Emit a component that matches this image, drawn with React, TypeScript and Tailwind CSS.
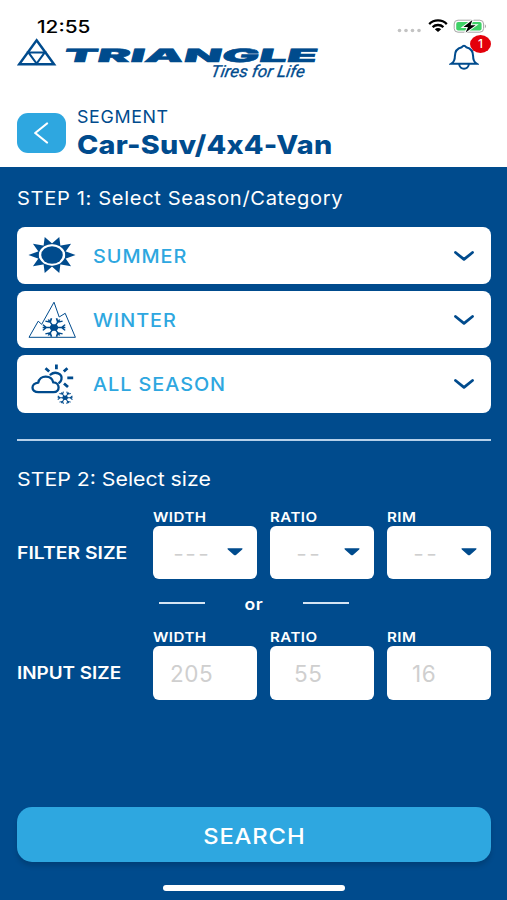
import type { ReactNode } from 'react'

const seasons = [
  { name: 'SUMMER', icon: <SunIcon /> },
  { name: 'WINTER', icon: <MountainIcon /> },
  { name: 'ALL SEASON', icon: <CloudIcon /> },
]

const filters = [
  { label: 'WIDTH', empty: '---', example: '205', pad: 'pl-[17px]' },
  { label: 'RATIO', empty: '--', example: '55', pad: 'pl-[24px]' },
  { label: 'RIM', empty: '--', example: '16', pad: 'pl-[25px]' },
]

// six-armed snowflake centred on 0,0
function Snowflake({ transform }: { transform: string }) {
  return (
    <g transform={transform} stroke="#004b8d" strokeWidth="1.6" fill="none">
      {[0, 60, 120, 180, 240, 300].map((a) => (
        <path key={a} transform={`rotate(${a + 30})`} d="M0 0V-11M-3.4 -10.8L0 -7.4L3.4 -10.8" />
      ))}
      <circle r="3.2" fill="#004b8d" />
    </g>
  )
}

function SunIcon() {
  return (
    <svg width="48" height="38" viewBox="0 0 48 38" fill="#004b8d">
      {[0, 36, 72, 108, 144, 180, 216, 252, 288, 324].map((a) => (
        <path
          key={a}
          transform={`translate(24 19) scale(1.24 1) rotate(${a + 18})`}
          d="M-3.9 -10.2L0 -19L3.9 -10.2Q0 -11 -3.9 -10.2Z"
        />
      ))}
      <ellipse cx="24" cy="19" rx="10.8" ry="8.8" />
    </svg>
  )
}

function MountainIcon() {
  return (
    <svg width="48" height="38" viewBox="0 0 48 38" fill="none">
      <path
        d="M1 36.3L10.2 20.2L13.7 23.3L26 1.2L31.2 16L37.2 12.3L47.4 36.3Z"
        stroke="#004b8d"
        strokeWidth="1"
      />
      <Snowflake transform="translate(26 26.5) scale(1.03 0.84)" />
    </svg>
  )
}

function CloudIcon() {
  return (
    <svg width="48" height="42" viewBox="0 0 48 42" fill="none">
      <g stroke="#004b8d" strokeWidth="2.3" strokeLinecap="round" strokeLinejoin="round">
        <path d="M10.5 29.2C2.5 29.2 2.6 20.2 10.3 19.6C11.5 11.8 23.5 11.4 25.3 19.4C32.2 19.6 32.5 29.2 25.5 29.2Z" />
        <path d="M22.5 11.6C27 7.8 34.8 10.5 33.4 16.4C33 18 32.3 19 31.2 19.7" />
      </g>
      <path
        d="M28.4 1.5V6.2M17.5 5.2L21.2 8.5M39.4 5.2L35.8 8.5M39.3 14.9H45.2M36 20.5L40 24"
        stroke="#004b8d"
        strokeWidth="2.8"
      />
      <Snowflake transform="translate(37.1 34.8) scale(0.68 0.56)" />
    </svg>
  )
}

function Logo() {
  return (
    <svg width="306" height="42" viewBox="0 0 306 42" fill="#004b8d" className="mt-px">
      <g fill="none" stroke="#004b8d">
        <path d="M19.6 2.3L37 26.3H2.2Z" strokeWidth="2.5" />
        <path d="M11.4 14.4H27.8L19.6 25.6Z" strokeWidth="2" />
      </g>
      <text
        transform="translate(45.5 23.8) skewX(-14)"
        fontFamily="Inter, 'Liberation Sans', sans-serif"
        fontWeight="900"
        fontSize="18.2"
        textLength="253.5"
        lengthAdjust="spacingAndGlyphs"
        stroke="#004b8d"
        strokeWidth="0.5"
      >
        TRIANGLE
      </text>
      <text
        transform="translate(193 38.5) skewX(-10)"
        fontFamily="Roboto, 'Liberation Sans', sans-serif"
        fontSize="16.5"
        fontStyle="italic"
        textLength="94"
        lengthAdjust="spacingAndGlyphs"
        stroke="#004b8d"
        strokeWidth="0.3"
      >
        Tires for Life
      </text>
    </svg>
  )
}

function StatusBar() {
  return (
    <div className="flex h-[37px] items-start justify-between pl-[37px] pr-[18px] pt-[18px]">
      <span className="origin-left scale-x-[1.22] text-[17px] font-medium leading-[18px] text-black">12:55</span>
      <svg width="92" height="18" viewBox="0 0 92 18">
        <g fill="#c3c3c3">
          <circle cx="2.5" cy="12.5" r="1.8" />
          <circle cx="9" cy="12.5" r="1.8" />
          <circle cx="15.5" cy="12.5" r="1.8" />
          <circle cx="22" cy="12.5" r="1.8" />
        </g>
        <g transform="translate(41 0)" fill="none" stroke="#000" strokeWidth="2.3">
          <path d="M-8.8 6.1C-4 1.2 4 1.2 8.8 6.1" />
          <path d="M-5.4 9.1C-2.4 6.3 2.4 6.3 5.4 9.1" />
          <path d="M-3.2 11.2C-1.4 9.7 1.4 9.7 3.2 11.2L0 14Z" fill="#000" stroke="none" />
        </g>
        <rect x="57.2" y="2.2" width="29.4" height="12" rx="3.8" fill="#fff" stroke="#a5a5a5" />
        <rect x="59.2" y="4" width="25.4" height="8.4" rx="2" fill="#3fd167" />
        <path d="M87.9 6.2V10.2Q90.1 8.2 87.9 6.2Z" fill="#a5a5a5" />
        <path
          d="M75.4 2L66.4 9H71L68.6 14.4L78.6 7.2H73.6Z"
          fill="#000"
          stroke="#fff"
          strokeWidth="2"
          paintOrder="stroke"
        />
      </svg>
    </div>
  )
}

function Bell() {
  return (
    <div className="relative mr-[28px] mt-[6px] h-[30px] w-[30px]">
      <svg width="30" height="30" viewBox="0 0 30 30" fill="none" stroke="#004b8d" strokeWidth="2">
        <path d="M2.4 20.7C5.5 18.8 5.9 17 5.9 13C5.9 7.5 9.2 5 12.8 4.2Q15 1.2 17.2 4.2C20.8 5 24.1 7.5 24.1 13C24.1 17 24.5 18.8 27.6 20.7Z" />
        <path d="M10.2 21C10.4 27.4 19.6 27.4 19.8 21" />
      </svg>
      <span className="absolute -top-[8px] left-[21px] flex h-[18px] w-[21px] items-center justify-center rounded-[50%] bg-[#e3000b] text-[12px] font-medium text-white">
        1
      </span>
    </div>
  )
}

function Field({ label, children }: { label: string; children: ReactNode }) {
  return (
    <div className="w-[104px]">
      <div className="origin-left scale-x-[1.12] text-[13.5px] font-semibold leading-[18px] tracking-[0.4px]">{label}</div>
      <div className="flex h-[53.5px] items-center rounded-[6px] bg-white text-[#cfcfcf]">{children}</div>
    </div>
  )
}

export default function App() {
  return (
    <div className="flex h-[900px] w-[507px] flex-col overflow-hidden bg-[#004b8d] font-['Inter','Liberation_Sans',sans-serif] text-white">
      <header className="h-[167px] bg-white text-[#004b8d]">
        <StatusBar />
        <div className="flex h-[66px] justify-between pl-[17px]">
          <Logo />
          <Bell />
        </div>
        <div className="flex pl-[17px] pt-[3px]">
          <button className="mt-[7px] flex h-[40px] w-[49px] items-center justify-center rounded-[11px] bg-[#2ea7e0]">
            <svg width="16" height="22" viewBox="0 0 16 22" fill="none" stroke="#fff" strokeWidth="2.2" strokeLinecap="round" strokeLinejoin="round">
              <path d="M13 1.5L1.2 11L13 20.5" />
            </svg>
          </button>
          <div className="ml-[11px]">
            <div className="origin-left scale-x-[1.05] text-[17px] leading-[22px] tracking-[0.6px]">SEGMENT</div>
            <h1 className="origin-left scale-x-[1.105] whitespace-nowrap text-[26px] font-extrabold leading-[34px] tracking-[0.2px]">
              Car-Suv/4x4-Van
            </h1>
          </div>
        </div>
      </header>

      <main className="flex flex-1 flex-col px-[17px] pr-4">
        <h2 className="mt-[19px] origin-left scale-x-[1.06] whitespace-nowrap text-[19px] leading-[25px] tracking-[0.6px]">
          STEP 1: Select Season/Category
        </h2>
        <div className="mt-[15.5px] flex flex-col gap-[6.5px]">
          {seasons.map((s) => (
            <button key={s.name} className="flex h-[57.7px] items-center rounded-[8px] bg-white pl-[11px] pr-[17px]">
              {s.icon}
              <span className="ml-[17px] origin-left scale-x-[1.045] pt-[3px] text-[19px] font-medium tracking-[0.9px] text-[#2ea7e0]">
                {s.name}
              </span>
              <svg width="20" height="11" viewBox="0 0 20 11" fill="none" stroke="#004b8d" strokeWidth="2.8" strokeLinecap="round" strokeLinejoin="round" className="ml-auto mt-0.5">
                <path d="M1.5 1.5L10 8.4L18.5 1.5" />
              </svg>
            </button>
          ))}
        </div>

        <div className="mt-[26px] h-[2px] bg-[#b5d0ea]" />

        <h2 className="mt-[26px] origin-left scale-x-[1.12] text-[19px] leading-[25px]">STEP 2: Select size</h2>
        <div className="mt-[16px] flex">
          <div className="mt-[20px] flex w-[136px] origin-left scale-x-[1.14] items-center text-[17px] font-semibold">FILTER SIZE</div>
          <div className="flex gap-[13px]">
            {filters.map((f) => (
              <Field key={f.label} label={f.label}>
                <span className="flex flex-1 justify-center gap-[3px] pl-[2px] pt-[4px]">
                  {f.empty.split('').map((dash, i) => (
                    <span key={i} className="inline-block scale-x-[1.15] text-[20px] leading-5">
                      {dash}
                    </span>
                  ))}
                </span>
                <svg width="16" height="8" viewBox="0 0 16 8" fill="#004b8d" className="mr-[14px]">
                  <path d="M0.8 0.3H15.2Q15.9 0.8 15.2 1.4L9 7Q8 7.7 7 7L0.8 1.4Q0.1 0.8 0.8 0.3Z" />
                </svg>
              </Field>
            ))}
          </div>
        </div>

        <div className="mt-[12px] flex h-[24px] items-center pl-[142px]">
          <div className="h-[1.5px] w-[46px] bg-[#d5e4f3]" />
          <div className="w-[98px] scale-x-[1.1] pt-[2px] text-center text-[16px] font-semibold tracking-[0.6px]">or</div>
          <div className="h-[1.5px] w-[46px] bg-[#d5e4f3]" />
        </div>

        <div className="mt-[13px] flex">
          <div className="mt-[20px] flex w-[136px] origin-left scale-x-[1.11] items-center text-[17px] font-semibold">INPUT SIZE</div>
          <div className="flex gap-[13px]">
            {filters.map((f) => (
              <Field key={f.label} label={f.label}>
                <span className={`pt-0.5 text-[22.5px] tracking-[0.5px] ${f.pad}`}>{f.example}</span>
              </Field>
            ))}
          </div>
        </div>

        <button className="mt-auto h-[55px] shrink-0 rounded-[15px] bg-[#2ea7e0] pt-[3px] text-[22px] font-medium shadow-[0_4px_5px_rgba(0,0,0,0.15)]">
          <span className="inline-block scale-x-[1.08] tracking-[0.8px]">SEARCH</span>
        </button>
        <div className="mb-[9px] ml-[146px] mt-[23px] h-[6px] w-[182px] rounded-full bg-white" />
      </main>
    </div>
  )
}
